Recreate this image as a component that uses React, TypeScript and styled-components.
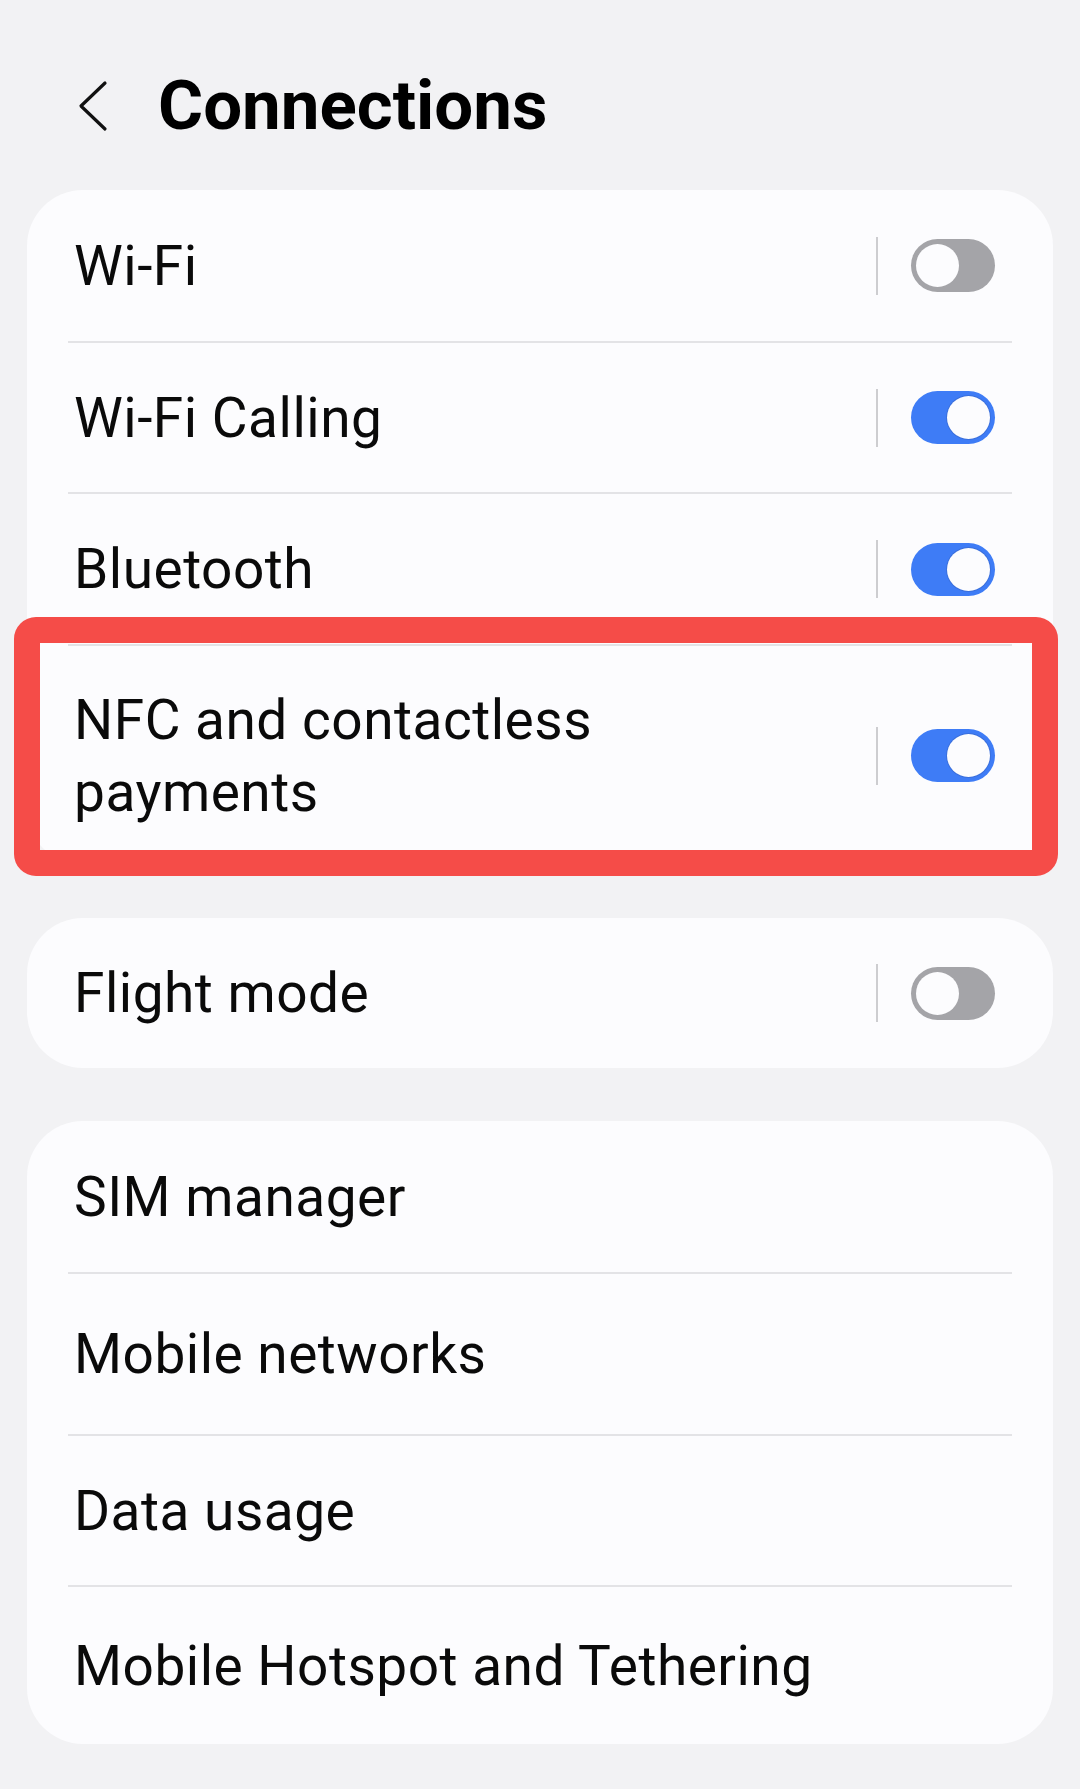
import styled, { createGlobalStyle } from "styled-components";

const GlobalStyle = createGlobalStyle`
  html,
  body {
    margin: 0;
    padding: 0;
    background-color: #f2f2f4;
    font-family: Roboto, "Liberation Sans", sans-serif;
    color: #0c0c0c;
  }
`;

const Page = styled.div`
  width: 1080px;
  min-height: 1789px;
  box-sizing: border-box;
`;

const Header = styled.header`
  height: 190px;
  box-sizing: border-box;
  padding: 22px 0 0 78px;
  display: flex;
  align-items: center;
`;

const BackIcon = styled.svg`
  width: 30px;
  height: 52px;
  flex-shrink: 0;
`;

const Title = styled.h1`
  margin: 0 0 0 50px;
  font-size: 69px;
  font-weight: 700;
  line-height: 1.2;
  color: #000;
`;

const Stack = styled.div`
  display: flex;
  flex-direction: column;
  gap: 53px;
  padding: 0 27px;
`;

const Card = styled.section`
  background-color: #fcfcfe;
  border-radius: 56px;
  display: flex;
  flex-direction: column;
`;

const Row = styled.div<{ $h: number }>`
  position: relative;
  height: ${(p) => p.$h}px;
  display: flex;
  align-items: center;
  padding: 0 58px 0 47px;
`;

const Label = styled.div`
  flex: 1;
  font-size: 55px;
  font-weight: 400;
  letter-spacing: 0.5px;
  line-height: 72px;
  white-space: pre-line;
  color: #0a0a0a;
`;

const Separator = styled.div`
  height: 2px;
  margin: 0 41px;
  background-color: #e3e3e6;
`;

const SwitchGroup = styled.div`
  display: flex;
  align-items: center;
  gap: 33px;
`;

const VLine = styled.div`
  width: 2px;
  height: 58px;
  background-color: #cdcdd0;
`;

const Track = styled.div<{ $on: boolean }>`
  width: 84px;
  height: 53px;
  box-sizing: border-box;
  border-radius: 27px;
  padding: 5px;
  display: flex;
  justify-content: ${(p) => (p.$on ? "flex-end" : "flex-start")};
  align-items: center;
  background-color: ${(p) => (p.$on ? "#3e7cf6" : "#a4a4a8")};
`;

const Knob = styled.div<{ $on: boolean }>`
  width: 43px;
  height: 43px;
  border-radius: 50%;
  background-color: #fcfcfe;
  box-shadow: ${(p) => (p.$on ? "0 0 0 1px #3a6fdc" : "none")};
`;

const Highlight = styled.div`
  position: absolute;
  top: -29px;
  left: -13px;
  right: -5px;
  bottom: -11px;
  border: 26px solid #f54c48;
  border-radius: 22px;
  pointer-events: none;
`;

type Item = {
  label: string;
  h: number;
  toggle?: boolean;
  highlight?: boolean;
};

const groups: Item[][] = [
  [
    { label: "Wi-Fi", h: 151, toggle: false },
    { label: "Wi-Fi Calling", h: 149, toggle: true },
    { label: "Bluetooth", h: 150, toggle: true },
    { label: "NFC and contactless\npayments", h: 219, toggle: true, highlight: true },
  ],
  [{ label: "Flight mode", h: 150, toggle: false }],
  [
    { label: "SIM manager", h: 151 },
    { label: "Mobile networks", h: 160 },
    { label: "Data usage", h: 149 },
    { label: "Mobile Hotspot and Tethering", h: 157 },
  ],
];

function Switch({ on }: { on: boolean }) {
  return (
    <SwitchGroup>
      <VLine />
      <Track $on={on}>
        <Knob $on={on} />
      </Track>
    </SwitchGroup>
  );
}

export default function App() {
  return (
    <Page>
      <GlobalStyle />
      <Header>
        <BackIcon viewBox="0 0 30 52">
          <path d="M27 3 L3 26 L27 49" fill="none" stroke="#111" strokeWidth="3.2" strokeLinecap="round" strokeLinejoin="round" />
        </BackIcon>
        <Title>Connections</Title>
      </Header>
      <Stack>
        {groups.map((items, gi) => (
          <Card key={gi}>
            {items.map((item, i) => (
              <div key={item.label}>
                {i > 0 && <Separator />}
                <Row $h={item.h}>
                  <Label>{item.label}</Label>
                  {item.toggle !== undefined && <Switch on={item.toggle} />}
                  {item.highlight && <Highlight />}
                </Row>
              </div>
            ))}
          </Card>
        ))}
      </Stack>
    </Page>
  );
}
